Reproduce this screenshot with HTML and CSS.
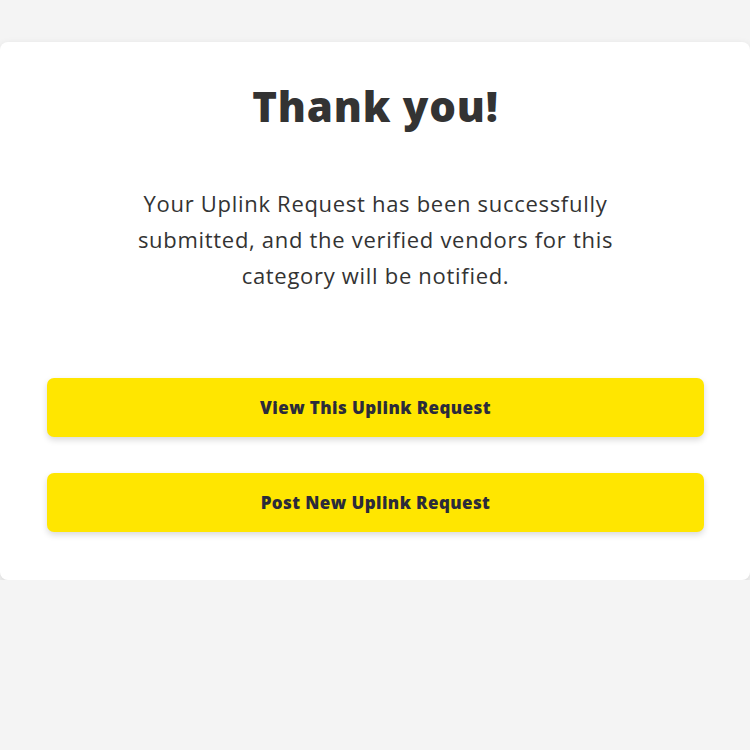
FILE: index.html
```html
<!DOCTYPE html>
<html lang="en">
<head>
  <meta charset="UTF-8">
  <meta name="viewport" content="width=device-width, initial-scale=1.0">
  <title>Thank you - Uplink</title>
  <link rel="stylesheet" href="styles.css">
</head>
<body>
  <div class="card">
    <h1>Thank you!</h1>
    <p class="message">Your Uplink Request has been successfully submitted, and the verified vendors for this category will be notified.</p>
    <div class="actions">
      <button class="btn">View This Uplink Request</button>
      <button class="btn">Post New Uplink Request</button>
    </div>
  </div>
</body>
</html>
```

FILE: styles.css
```css
body {
  font-family: "Open Sans", Lato, sans-serif;
  background-color: #f4f4f4;
  color: #333;
  margin: 0;
  padding: 42px 0 0;
}
.card {
  background-color: #fff;
  border-radius: 8px;
  box-shadow: 0 3px 8px rgba(0, 0, 0, 0.12);
  padding: 40px 46px 48px 47px;
}
h1 {
  text-align: center;
  font-size: 42px;
  font-weight: 800;
  letter-spacing: 0.8px;
  line-height: 48px;
  margin: 0;
  color: #333;
}
.message {
  width: 520px;
  margin: 55px auto 0;
  text-align: center;
  font-size: 22px;
  letter-spacing: 0.7px;
  line-height: 36px;
  font-weight: 400;
  color: #333;
}
.actions {
  display: flex;
  flex-direction: column;
  gap: 36px;
  margin-top: 85px;
}
.btn {
  height: 59px;
  border: none;
  border-radius: 7px;
  background-color: #ffe600;
  color: #2b2b3a;
  font-family: "Open Sans", sans-serif;
  font-size: 17px;
  font-weight: 800;
  letter-spacing: 0.4px;
  box-shadow: 0 3px 6px rgba(0, 0, 0, 0.15);
  cursor: pointer;
}
```
